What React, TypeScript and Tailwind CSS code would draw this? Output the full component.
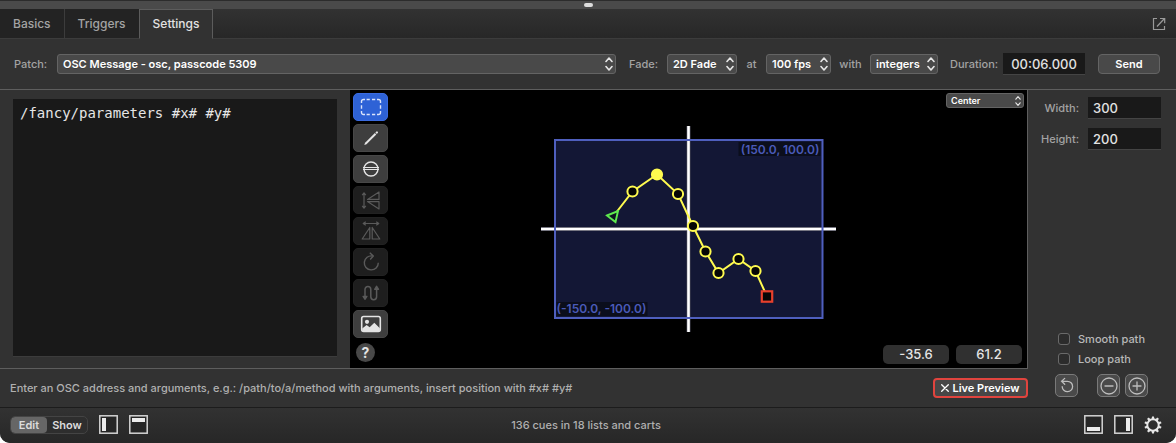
import { useState } from "react";
import type { ReactNode } from "react";
import clsx from "clsx";

type Point = { x: number; y: number; selected?: boolean };

const TABS = ["Basics", "Triggers", "Settings"];

// stage coordinates, origin in the middle of the cross
const START = { x: -75, y: -13 };
const END = { x: 78.5, y: 67.5 };
const POINTS: Point[] = [
  { x: -56, y: -37.5 },
  { x: -31.5, y: -54.5, selected: true },
  { x: -10.5, y: -35 },
  { x: 4.5, y: -3 },
  { x: 17, y: 22.5 },
  { x: 30, y: 44 },
  { x: 50, y: 30 },
  { x: 67, y: 42 },
];

type PopUpProps = {
  id: string;
  label: string;
  options: string[];
  className?: string;
  small?: boolean;
};

function PopUp({ id, label, options, className, small }: PopUpProps) {
  return (
    <div className={clsx("relative", className)}>
      <select
        id={id}
        aria-label={label}
        className={clsx(
          "block w-full appearance-none rounded-[3px] border border-[#646464] bg-[#494949] font-semibold text-white outline-none text-shadow-2xs",
          small ? "h-[15px] pr-3 pl-1 text-[9px] leading-[13px]" : "h-5 pr-3 pl-[5px] text-[11px] leading-[18px]",
        )}
      >
        {options.map((option) => (
          <option key={option}>{option}</option>
        ))}
      </select>
      <svg
        viewBox="0 0 8 14"
        className={clsx(
          "pointer-events-none absolute inset-y-0 right-[3px] my-auto fill-none stroke-[#e6e6e6]",
          small ? "h-[10px] w-[6px]" : "h-[14px] w-2",
        )}
        strokeWidth="1.6"
        strokeLinecap="round"
        strokeLinejoin="round"
      >
        <path d="M1 4.5 4 1l3 3.5M1 9.5 4 13l3-3.5" />
      </svg>
    </div>
  );
}

type ToolProps = {
  label: string;
  active?: boolean;
  disabled?: boolean;
  children: ReactNode;
};

function Tool({ label, active, disabled, children }: ToolProps) {
  return (
    <button
      type="button"
      aria-label={label}
      disabled={disabled}
      className={clsx(
        "flex h-7 w-[35px] items-center justify-center rounded-[5px] border",
        active && "border-[#3a6be0] bg-[#2e62d6] text-[#dbe4fa]",
        disabled && "border-[#222222] bg-[#1e1e1e] text-[#5a5a5a]",
        !active && !disabled && "border-[#474747] bg-[#3e3e3e] text-[#e4e4e4]",
      )}
    >
      <svg viewBox="0 0 22 20" className="h-5 w-[22px] fill-none stroke-current" strokeWidth="1.2" strokeLinejoin="round">
        {children}
      </svg>
    </button>
  );
}

function ToolPalette() {
  return (
    <div className="flex flex-col gap-[3px] pt-[3px] pb-1.5 pl-[3px]">
      <Tool label="Select" active>
        <path
          d="M1.5 6V4.5A2 2 0 0 1 3.5 2.5H5M17 2.5h1.5a2 2 0 0 1 2 2V6M20.5 14v1.5a2 2 0 0 1-2 2H17M5 17.5H3.5a2 2 0 0 1-2-2V14M6.6 2.5h3.2M12 2.5h3.2M6.6 17.5h3.2M12 17.5h3.2M1.5 8.2v3.6M20.5 8.2v3.6"
          strokeWidth="1.4"
        />
      </Tool>
      <Tool label="Draw line">
        <path d="m4.3 16.9.8-2.2L14.9 5l1.4 1.4-9.8 9.8z" className="fill-current stroke-none" />
        <path d="m15.4 4.5 1-.9a1 1 0 0 1 1.4 1.4l-1 .9z" className="fill-current stroke-none" />
      </Tool>
      <Tool label="Draw ellipse">
        <circle cx="11" cy="10" r="7" strokeWidth="1.4" />
        <path d="M3 8.5h16M3 10.5h16" strokeWidth="1" />
      </Tool>
      <Tool label="Flip vertically" disabled>
        <path d="M4 3v15M2.2 5.2 4 2.8l1.8 2.4M2.2 15.8 4 18.2l1.8-2.4" />
        <path d="M19 2v7.4H7.5zM19 11.6V19L7.5 11.6z" />
      </Tool>
      <Tool label="Flip horizontally" disabled>
        <path d="M3.5 2.5h15M5.8.7 3.2 2.5l2.6 1.8M16.2.7l2.6 1.8-2.6 1.8" />
        <path d="M9.8 6.5V18H2.2zM12.2 6.5V18h7.6z" />
      </Tool>
      <Tool label="Rotate" disabled>
        <path d="M12.5 4a7 7 0 1 0 5.8 6.8" strokeWidth="1.4" />
        <path d="m9.8.8 3.5 3.3L10.2 7.4" strokeWidth="1.4" />
      </Tool>
      <Tool label="Reverse path" disabled>
        <path d="M5 14V6.4a2.9 2.9 0 0 1 5.8 0v7.4a2.9 2.9 0 0 0 5.8 0V6" strokeWidth="1.5" />
        <path d="M3 13.3 5 16.4l2-3.1zM14.6 6.3l2-3.1 2 3.1z" className="fill-current" />
      </Tool>
      <Tool label="Background image">
        <rect x="1.7" y="2.5" width="18.6" height="15" rx="2" strokeWidth="1.6" />
        <circle cx="7" cy="7.8" r="2.1" className="fill-current stroke-none" />
        <path d="M2.2 17v-2.6l4.4-3.5 3.1 2.4 4.6-4.5 5.6 5.4V17z" className="fill-current stroke-none" />
      </Tool>
      <button
        type="button"
        aria-label="Help"
        className="mt-0.5 ml-[3px] size-[19px] rounded-full bg-[#484848] text-[14px] leading-[19px] font-bold text-[#e4e4e4]"
      >
        ?
      </button>
    </div>
  );
}

function PathStage() {
  const line = [START, ...POINTS, END].map((p) => `${p.x},${p.y}`).join(" ");

  return (
    <svg viewBox="-148.5 -103 297 206" className="h-[206px] w-[297px]">
      <rect x="-133.5" y="-89" width="267" height="178" fill="#131735" />
      <rect x="50" y="-87" width="82" height="14" fill="#0b0e1c" />
      <rect x="-132" y="73" width="91" height="14" fill="#0b0e1c" />
      <path d="M0-103V103M-147.5 0H147.5" stroke="#4a4a58" strokeWidth="4" />
      <path d="M0-103V103M-147.5 0H147.5" stroke="#ffffff" strokeWidth="2.6" />
      <rect x="-133.5" y="-89" width="267.5" height="178" fill="none" stroke="#4f5fbe" strokeWidth="2" />
      <text x="131" y="-75" textAnchor="end" className="fill-[#4a5ab8] text-[12px] font-semibold">
        (150.0, 100.0)
      </text>
      <text x="-132" y="84" className="fill-[#4a5ab8] text-[12px] font-semibold">
        (-150.0, -100.0)
      </text>
      <polyline points={line} fill="none" stroke="#fffb4f" strokeWidth="2" />
      {POINTS.map((p) => (
        <circle
          key={`${p.x},${p.y}`}
          cx={p.x}
          cy={p.y}
          r="5.1"
          fill={p.selected ? "#fffb4f" : "#060606"}
          stroke="#fffb4f"
          strokeWidth="2"
        />
      ))}
      <path d="M-81.5-13.5-70.5-18-73-7z" fill="#0c1420" stroke="#5eea4e" strokeWidth="1.9" />
      <rect x={END.x - 5.2} y={END.y - 5.2} width="10.4" height="10.4" fill="#060606" stroke="#e8402c" strokeWidth="2.2" />
    </svg>
  );
}

type PanelIconProps = { label: string; x: number; y: number; w: number; h: number };

function PanelButton({ label, x, y, w, h }: PanelIconProps) {
  return (
    <button type="button" aria-label={label}>
      <svg viewBox="0 0 19 19" className="size-[19px]">
        <rect x="0.8" y="0.8" width="17.4" height="17.4" fill="#262626" stroke="#d4d4d4" strokeWidth="1.5" />
        <rect x={x} y={y} width={w} height={h} fill="#ececec" />
      </svg>
    </button>
  );
}

function RoundButton({ label, children }: { label: string; children: ReactNode }) {
  return (
    <button
      type="button"
      aria-label={label}
      className="flex size-[23px] items-center justify-center rounded-[5px] border border-[#7a7a7a] bg-[#4a4a4a]"
    >
      <svg viewBox="0 0 20 20" className="size-5 shrink-0 fill-none stroke-[#bdbdbd]" strokeWidth="1.3" strokeLinecap="round">
        {children}
      </svg>
    </button>
  );
}

function Gear() {
  const teeth = [0, 36, 72, 108, 144, 180, 216, 252, 288, 324];

  return (
    <svg viewBox="0 0 18 18" className="size-[18px]">
      <circle cx="9" cy="9" r="5.7" fill="none" stroke="#e6e6e6" strokeWidth="1.9" />
      {teeth.map((angle) => (
        <path key={angle} d="M7.6 3.2 8 .4h2l.4 2.8z" fill="#e6e6e6" transform={`rotate(${angle} 9 9)`} />
      ))}
    </svg>
  );
}

export default function App() {
  const [tab, setTab] = useState("Settings");
  const [message, setMessage] = useState("/fancy/parameters #x# #y#");

  return (
    <div className="flex min-h-screen flex-col overflow-hidden rounded-b-[10px] bg-[#323232] font-['Inter',sans-serif] text-[11px] leading-4 font-medium text-[#a3a3a3]">
      <div className="flex h-[9px] justify-center border-t border-[#2c2c2c] bg-[#4a4a4a] pt-0.5">
        <div className="h-1 w-[9px] rounded-full bg-[#dcdcdc]" />
      </div>

      <nav className="flex h-[30px] items-stretch bg-linear-to-b from-[#323232] to-[#272727]">
        {TABS.map((name) => (
          <button
            key={name}
            type="button"
            onClick={() => setTab(name)}
            className={clsx(
              "border-r border-b px-[13px] text-[12px]",
              tab === name
                ? "-ml-px border-t border-l border-t-[#5c5c5c] border-r-[#5c5c5c] border-b-[#323232] border-l-[#5c5c5c] bg-[#323232] text-[#e2e2e2]"
                : "border-[#3c3c3c] bg-[#232323]",
            )}
          >
            {name}
          </button>
        ))}
        <div className="flex flex-1 items-center justify-end border-b border-[#3c3c3c] pr-[10px]">
          <button type="button" aria-label="Open in window">
            <svg viewBox="0 0 14 14" className="size-[14px] fill-none stroke-[#9a9a9a]" strokeWidth="1.2">
              <path d="M5 1.5H1.5v11h11V9M8 1.5h4.7v4.7M12.5 1.5 5 9.5" />
            </svg>
          </button>
        </div>
      </nav>

      <div className="flex h-[51px] items-center border-b border-[#5e5e5e] pr-4 pl-[14px] whitespace-nowrap">
        <label htmlFor="patch" className="w-[43px]">Patch:</label>
        <PopUp id="patch" label="Patch" options={["OSC Message - osc, passcode 5309"]} className="flex-1" />
        <label htmlFor="fade" className="w-[51px] pl-[13px]">Fade:</label>
        <PopUp id="fade" label="Fade" options={["2D Fade", "1D Fade", "No Fade"]} className="w-[70px]" />
        <label htmlFor="rate" className="w-[29px] text-center">at</label>
        <PopUp id="rate" label="at" options={["100 fps", "60 fps", "30 fps"]} className="w-[65px]" />
        <label htmlFor="number-type" className="w-[39px] text-center">with</label>
        <PopUp id="number-type" label="with" options={["integers", "floats"]} className="w-[68px]" />
        <label htmlFor="duration" className="w-[65px] pl-3">Duration:</label>
        <input
          id="duration"
          defaultValue="00:06.000"
          className="h-[22px] w-[82px] border-b border-[#444444] bg-[#191919] text-center text-[13px] text-[#e2e2e2] outline-none"
        />
        <button
          type="button"
          className="ml-[13px] h-5 w-[62px] rounded-[4px] border border-[#646464] bg-[#494949] text-[11px] leading-[18px] font-semibold text-white"
        >
          Send
        </button>
      </div>

      <main className="flex flex-1">
        <div className="flex min-w-0 flex-1 flex-col">
          <div className="flex flex-1 border-b border-[#5e5e5e]">
            <div className="flex w-[350px] shrink-0 pt-[9px] pr-[13px] pb-[11px] pl-[13px]">
              <textarea
                aria-label="OSC message"
                spellCheck={false}
                value={message}
                onChange={(event) => setMessage(event.target.value)}
                className="flex-1 resize-none border-b border-[#3c3c3c] bg-[#191919] px-[7px] py-1.5 font-['DejaVu_Sans_Mono',monospace] text-[14px] leading-4 font-normal text-[#e6e6e6] outline-none"
              />
            </div>
            <div className="relative flex flex-1 border-r border-[#5e5e5e] bg-black">
              <ToolPalette />
              <div className="pointer-events-none absolute inset-0 flex items-center justify-center">
                <PathStage />
              </div>
              <PopUp
                id="origin"
                label="Origin"
                options={["Center", "Top Left", "Bottom Left"]}
                className="mt-[3px] mr-[3px] ml-auto h-[15px] w-[78px]"
                small
              />
              <div className="absolute right-[5px] bottom-1 flex gap-[7px] text-[13px] leading-[19px] text-[#e6e6e6]">
                <output className="w-[66px] rounded-[5px] bg-[#303030] text-center">-35.6</output>
                <output className="w-[66px] rounded-[5px] bg-[#303030] text-center">61.2</output>
              </div>
            </div>
          </div>

          <div className="flex h-[38px] items-center justify-between pl-[10px]">
            <p className="text-[#b0b0b0]">
              Enter an OSC address and arguments, e.g.: /path/to/a/method with arguments, insert position with #x# #y#
            </p>
            <button
              type="button"
              className="flex h-5 w-[95px] items-center justify-center gap-[3px] rounded-[4px] border-2 border-[#e0443e] bg-[#474747] font-semibold whitespace-nowrap text-white"
            >
              <svg viewBox="0 0 8 8" className="size-2 stroke-white" strokeWidth="1.3" strokeLinecap="round">
                <path d="m.7.7 6.6 6.6M7.3.7.7 7.3" />
              </svg>
              Live Preview
            </button>
          </div>
        </div>

        <aside className="flex w-[148px] shrink-0 flex-col justify-between pt-[7px] pb-[10px]">
          <div className="flex flex-col gap-[9px] pr-[15px]">
            <div className="flex items-center justify-end gap-[9px]">
              <label htmlFor="width">Width:</label>
              <input
                id="width"
                defaultValue="300"
                className="h-[22px] w-[73px] border-b border-[#444444] bg-[#191919] px-[5px] text-[13px] text-[#e2e2e2] outline-none"
              />
            </div>
            <div className="flex items-center justify-end gap-[9px]">
              <label htmlFor="height">Height:</label>
              <input
                id="height"
                defaultValue="200"
                className="h-[22px] w-[73px] border-b border-[#444444] bg-[#191919] px-[5px] text-[13px] text-[#e2e2e2] outline-none"
              />
            </div>
          </div>

          <div>
            <div className="flex flex-col gap-1 pl-[30px] text-[#b8b8b8]">
              {["Smooth path", "Loop path"].map((name) => (
                <label key={name} className="flex items-center gap-2">
                  <input
                    type="checkbox"
                    className="size-3 appearance-none rounded-[3px] border border-[#6a6a6a] bg-[#2c2c2c] checked:bg-[#2e62d6]"
                  />
                  {name}
                </label>
              ))}
            </div>
            <div className="mt-[7px] flex pl-[27px]">
              <RoundButton label="Reset path">
                <path d="M5 5.3h5.4a5.2 5.2 0 1 1-5.2 5.4M7.7 2.4 4.6 5.3l3.1 2.9" />
              </RoundButton>
              <div className="ml-[19px] flex gap-[5px]">
                <RoundButton label="Zoom out">
                  <circle cx="10" cy="10" r="8" />
                  <path d="M6 10h8" />
                </RoundButton>
                <RoundButton label="Zoom in">
                  <circle cx="10" cy="10" r="8" />
                  <path d="M6 10h8M10 6v8" />
                </RoundButton>
              </div>
            </div>
          </div>
        </aside>
      </main>

      <footer className="grid h-9 grid-cols-[1fr_auto_1fr] items-center border-t border-[#1c1c1c] bg-linear-to-b from-[#323232] to-[#272727] pr-[14px] pb-0.5 pl-[10px]">
        <div className="flex items-center gap-[11px]">
          <div className="flex h-[18px] w-[78px] overflow-hidden rounded-[5px] border border-[#444444] bg-[#2e2e2e] font-semibold text-[#dcdcdc]">
            <button type="button" className="w-9 rounded-[4px] bg-[#666666]">Edit</button>
            <button type="button" className="flex-1">Show</button>
          </div>
          <PanelButton label="Toggle left sidebar" x={3} y={3} w={4} h={13} />
          <PanelButton label="Toggle toolbar" x={3} y={3} w={13} h={4} />
        </div>
        <p className="text-[#b0b0b0]">136 cues in 18 lists and carts</p>
        <div className="flex items-center justify-end gap-[11px]">
          <PanelButton label="Toggle inspector" x={3} y={12} w={13} h={4} />
          <PanelButton label="Toggle right sidebar" x={12} y={3} w={4} h={13} />
          <button type="button" aria-label="Workspace settings">
            <Gear />
          </button>
        </div>
      </footer>
    </div>
  );
}
